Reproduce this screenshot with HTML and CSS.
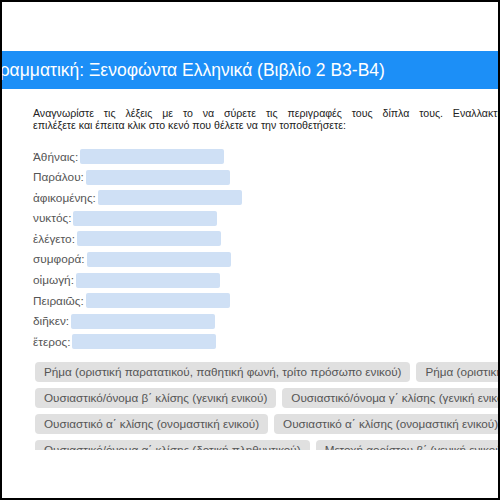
FILE: index.html
```html
<!DOCTYPE html>
<html lang="el">
<head>
<meta charset="utf-8">
<title>Γραμματική: Ξενοφώντα Ελληνικά</title>
<link rel="stylesheet" href="styles.css">
</head>
<body>
<div class="frame">
  <div class="page">
    <div class="header"><h1 class="title">Γραμματική: Ξενοφώντα Ελληνικά (Βιβλίο 2 Β3-Β4)</h1></div>
    <div class="content">
      <p class="intro"><span class="line-full">Αναγνωρίστε τις λέξεις με το να σύρετε τις περιγραφές τους δίπλα τους. Εναλλακτικά,</span><span class="line-last">επιλέξετε και έπειτα κλικ στο κενό που θέλετε να την τοποθετήσετε:</span></p>
      <div class="rows">
        <div class="row"><span class="label">Ἀθήναις:</span><span class="drop"></span></div>
        <div class="row"><span class="label">Παράλου:</span><span class="drop"></span></div>
        <div class="row"><span class="label">ἀφικομένης:</span><span class="drop"></span></div>
        <div class="row"><span class="label">νυκτός:</span><span class="drop"></span></div>
        <div class="row"><span class="label">ἐλέγετο:</span><span class="drop"></span></div>
        <div class="row"><span class="label">συμφορά:</span><span class="drop"></span></div>
        <div class="row"><span class="label">οἰμωγή:</span><span class="drop"></span></div>
        <div class="row"><span class="label">Πειραιῶς:</span><span class="drop"></span></div>
        <div class="row"><span class="label">διῆκεν:</span><span class="drop"></span></div>
        <div class="row"><span class="label">ἕτερος:</span><span class="drop"></span></div>
      </div>
      <div class="chips">
        <div class="chip-row">
          <span class="chip">Ρήμα (οριστική παρατατικού, παθητική φωνή, τρίτο πρόσωπο ενικού)</span>
          <span class="chip">Ρήμα (οριστική παρατατικού, ενεργητική φωνή, τρίτο πρόσωπο ενικού)</span>
        </div>
        <div class="chip-row">
          <span class="chip">Ουσιαστικό/όνομα β΄ κλίσης (γενική ενικού)</span>
          <span class="chip">Ουσιαστικό/όνομα γ΄ κλίσης (γενική ενικού)</span>
        </div>
        <div class="chip-row">
          <span class="chip">Ουσιαστικό α΄ κλίσης (ονομαστική ενικού)</span>
          <span class="chip">Ουσιαστικό α΄ κλίσης (ονομαστική ενικού)</span>
        </div>
        <div class="chip-row">
          <span class="chip">Ουσιαστικό/όνομα α΄ κλίσης (δοτική πληθυντικού)</span>
          <span class="chip">Μετοχή αορίστου β΄ (γενική ενικού)</span>
        </div>
      </div>
    </div>
  </div>
</div>
</body>
</html>
```

FILE: styles.css
```css
html, body {
  margin: 0;
  padding: 0;
  background: #fff;
}

.frame {
  width: 500px;
  height: 500px;
  box-sizing: border-box;
  border: 2px solid #000;
  overflow: hidden;
  background: #fff;
  font-family: "Liberation Sans", Arial, sans-serif;
}

.page {
  height: 448px;
  overflow: hidden;
  padding-top: 49px;
  box-sizing: border-box;
}

.header {
  height: 38px;
  background: #1c8ff7;
  display: flex;
  align-items: center;
  overflow: hidden;
}

.title {
  margin: 0 0 0 -12px;
  font-size: 17.5px;
  font-weight: normal;
  color: #fff;
  white-space: nowrap;
}

.content {
  padding-left: 31px;
}

.intro {
  margin: 18px 0 0 0;
  font-size: 10.6px;
  line-height: 12px;
  color: #222;
  white-space: nowrap;
}

.line-full {
  display: block;
  width: 481px;
  white-space: normal;
  text-align: justify;
  text-align-last: justify;
}

.line-last {
  display: block;
}

.rows {
  margin-top: 18px;
  display: flex;
  flex-direction: column;
  gap: 5.6px;
}

.row {
  display: flex;
  align-items: center;
  height: 15px;
}

.label {
  font-size: 11.8px;
  color: #555;
  margin-right: 2px;
  white-space: nowrap;
}

.drop {
  width: 144px;
  height: 15px;
  background: #cfe0f5;
  border-radius: 2px;
}

.chips {
  margin-top: 13px;
  margin-left: 2px;
  display: flex;
  flex-direction: column;
  gap: 6px;
}

.chip-row {
  display: flex;
  gap: 6px;
  white-space: nowrap;
}

.chip {
  flex: none;
  height: 20px;
  line-height: 20px;
  padding: 0 9px;
  background: #e0e0e0;
  color: #555;
  font-size: 11.7px;
  border-radius: 4px;
}
```
